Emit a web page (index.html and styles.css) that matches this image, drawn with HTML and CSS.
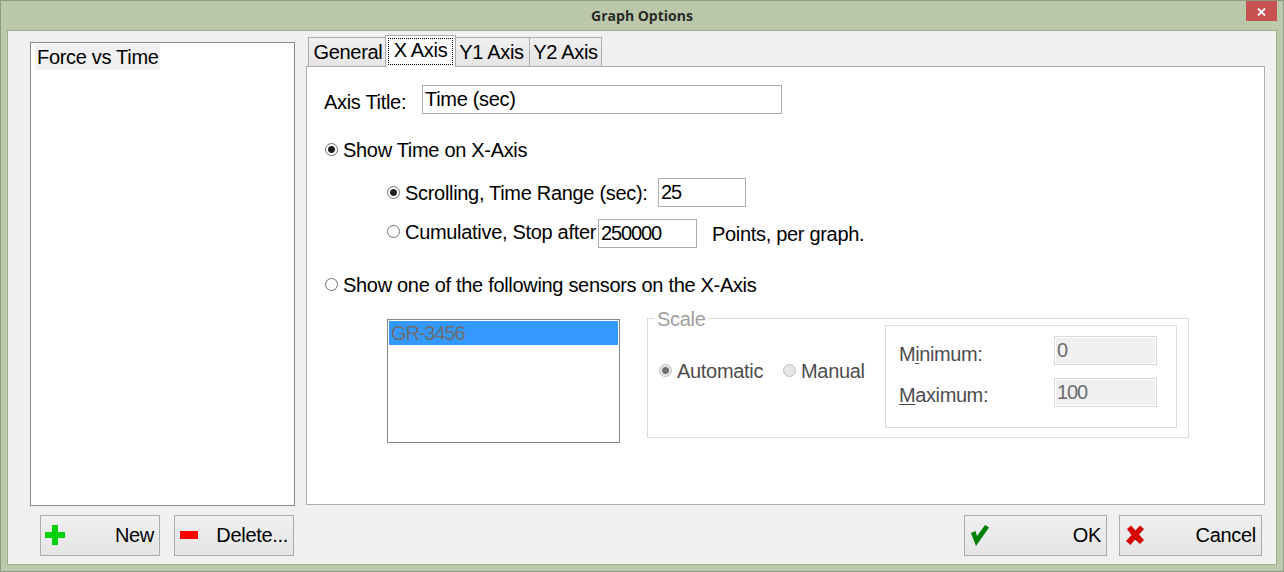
FILE: index.html
```
<!DOCTYPE html>
<html lang="en">

<head>
    <meta charset="UTF-8">
    <title>Graph Options</title>
    <link rel="stylesheet" href="styles.css">
</head>

<body>
    <div class="window">
        <header class="titlebar">
            <h1 class="title">Graph Options</h1>
            <button class="close" aria-label="Close">
                <svg class="icon-close" width="9" height="8" viewBox="0 0 9 8"><path d="M1 0.5L8 7.5M8 0.5L1 7.5" stroke="#fff" stroke-width="1.8" /></svg>
            </button>
        </header>

        <main class="content">
            <section class="sidebar">
                <ul class="graph-list">
                    <li class="graph-item">Force vs Time</li>
                </ul>
                <div class="buttons buttons-left">
                    <button class="btn">
                        <svg class="icon-plus" width="20" height="20" viewBox="0 0 20 20"><path d="M7 0h6v7h7v6h-7v7H7v-7H0V7h7z" fill="#00d20a" /></svg>
                        <span>New</span>
                    </button>
                    <button class="btn">
                        <svg class="icon-minus" width="18" height="8" viewBox="0 0 18 8"><path d="M0 0h18v8H0z" fill="#f00" /></svg>
                        <span class="delete-text">Delete...</span>
                    </button>
                </div>
            </section>

            <section class="options">
                <nav class="tabs">
                    <button class="tab tab-general">General</button>
                    <button class="tab active"><span class="focus">X Axis</span></button>
                    <button class="tab tab-y1">Y1 Axis</button>
                    <button class="tab tab-y2">Y2 Axis</button>
                </nav>

                <div class="panel">
                    <div class="row row-title">
                        <label class="axis-label" for="axisTitle">Axis Title:</label>
                        <input class="field field-title" id="axisTitle" type="text" value="Time (sec)">
                    </div>

                    <label class="row row-time">
                        <input class="radio" type="radio" name="source" checked>
                        <span>Show Time on X-Axis</span>
                    </label>

                    <div class="row row-scroll">
                        <label class="choice">
                            <input class="radio" type="radio" name="mode" checked>
                            <span class="scroll-text">Scrolling, Time Range (sec):</span>
                        </label>
                        <input class="field field-number field-range" type="text" value="25">
                    </div>

                    <div class="row row-cumulative">
                        <label class="choice">
                            <input class="radio" type="radio" name="mode">
                            <span class="cumulative-text">Cumulative, Stop after</span>
                        </label>
                        <input class="field field-number field-points" type="text" value="250000">
                        <span class="points-text">Points, per graph.</span>
                    </div>

                    <label class="row row-sensors">
                        <input class="radio" type="radio" name="source">
                        <span>Show one of the following sensors on the X-Axis</span>
                    </label>

                    <div class="row row-scale">
                        <ul class="sensor-list">
                            <li class="sensor-item">GR-3456</li>
                        </ul>

                        <div class="scale">
                            <span class="scale-legend">Scale</span>
                            <label class="choice scale-auto">
                                <input class="radio" type="radio" name="scale" checked disabled>
                                <span>Automatic</span>
                            </label>
                            <label class="choice scale-manual">
                                <input class="radio" type="radio" name="scale" disabled>
                                <span>Manual</span>
                            </label>
                            <div class="limits">
                                <label class="limit">
                                    <span class="limit-text">M<u>i</u>nimum:</span>
                                    <input class="field field-number" type="text" value="0" disabled>
                                </label>
                                <label class="limit">
                                    <span class="limit-text limit-max"><u>M</u>aximum:</span>
                                    <input class="field field-number" type="text" value="100" disabled>
                                </label>
                            </div>
                        </div>
                    </div>
                </div>

                <div class="buttons buttons-right">
                    <button class="btn btn-wide">
                        <svg class="icon-ok" width="18" height="21" viewBox="0 0 18 21"><path d="M0 8L4.5 6L6 11L14 0L18 2.5L5 21z" fill="#008000" /></svg>
                        <span>OK</span>
                    </button>
                    <button class="btn btn-wide">
                        <svg class="icon-cancel" width="18" height="20" viewBox="0 0 18 20"><path d="M1 4L5 0.5L9.5 5.5L14 0.5L18 4L13 9.5L18 15L14 19L9 14.5L4.5 20L0 16L5.5 10z" fill="#d60000" /></svg>
                        <span>Cancel</span>
                    </button>
                </div>
            </section>
        </main>
    </div>
</body>

</html>
```
FILE: styles.css
```
* {
    box-sizing: border-box;
}

body {
    margin: 0;
    font-family: "Liberation Sans", Arial, sans-serif;
    font-size: 20px;
    line-height: 24px;
    letter-spacing: -0.31px;
    color: #000;
}

button,
input {
    font: inherit;
    letter-spacing: inherit;
    color: inherit;
    margin: 0;
}

ul {
    list-style: none;
    margin: 0;
    padding: 0;
}

svg {
    flex: none;
}

/* window frame */
.window {
    display: flex;
    flex-direction: column;
    width: 1284px;
    height: 572px;
    padding: 0 6px 6px;
    border: 1px solid #8f9b80;
    background: #bbc8a9;
}

.titlebar {
    display: flex;
    justify-content: center;
    position: relative;
    height: 29px;
}

.title {
    margin: 3px 0 0;
    font: bold 14px/24px "Open Sans", "Noto Sans", sans-serif;
    letter-spacing: 0;
    color: #2a2a2a;
}

.close {
    display: flex;
    align-items: center;
    justify-content: center;
    position: absolute;
    top: 0;
    right: 0;
    width: 31px;
    height: 20px;
    padding: 1px 0 0;
    border: none;
    background: #c75050;
}

.content {
    display: flex;
    flex: 1;
    border: 1px solid #9fad8b;
    background: #f0f0f0;
}

/* graph list */
.sidebar {
    width: 265px;
    margin: 11px 0 0 22px;
}

.graph-list {
    height: 464px;
    padding: 1px 4px;
    border: 1px solid #828790;
    background: #fff;
}

.graph-item {
    width: 125px;
    height: 26px;
    padding: 1px 2px;
    background: #f0f0f0;
    white-space: nowrap;
}

.buttons {
    display: flex;
}

.buttons-left {
    gap: 14px;
    margin: 9px 0 0 10px;
}

.buttons-right {
    justify-content: flex-end;
    gap: 12px;
    margin: 10px 3px 0 0;
}

.btn {
    display: flex;
    align-items: center;
    justify-content: space-between;
    width: 120px;
    height: 41px;
    padding: 0 5px 1px 4px;
    border: 1px solid #acacac;
    background: linear-gradient(#f0f0f0, #e5e5e5);
}

.btn-wide {
    width: 143px;
    padding: 0 5px 1px 6px;
}

.icon-minus {
    margin-left: 1px;
}

/* tabs */
.options {
    width: 959px;
    margin: 4px 0 0 11px;
}

.tabs {
    display: flex;
    align-items: flex-end;
    height: 31px;
    padding-left: 2px;
}

.tab {
    height: 29px;
    padding: 0 0 1px;
    border: 1px solid #acacac;
    border-bottom: none;
    background: linear-gradient(#f0f0f0, #e5e5e5);
    white-space: nowrap;
}

.tab-general {
    width: 78px;
    padding-left: 2px;
}

.tab-y1 {
    width: 74px;
    padding-right: 2px;
    border-left: none;
}

.tab-y2 {
    width: 72px;
    border-left: none;
}

.tab.active {
    z-index: 1;
    width: 71px;
    height: 32px;
    margin: 0 0 -1px -1px;
    padding: 2px;
    background: #fff;
}

.focus {
    display: block;
    height: 27px;
    border: 1px dotted #000;
    line-height: 23px;
}

.panel {
    height: 439px;
    padding: 18px 0 0 17px;
    border: 1px solid #acacac;
    background: #fff;
}

/* form rows */
.row,
.choice {
    display: flex;
    align-items: flex-start;
    white-space: nowrap;
}

.row-title {
    height: 53px;
}

.axis-label {
    width: 98px;
    padding-top: 5px;
}

.row-time {
    height: 40px;
    padding-left: 1px;
}

.row-scroll {
    height: 41px;
    padding-left: 63px;
}

.scroll-text {
    width: 253px;
}

.row-scroll .choice {
    padding-top: 3px;
}

.row-cumulative {
    height: 54px;
    padding-left: 63px;
}

.row-cumulative .choice {
    padding-top: 1px;
}

.cumulative-text {
    width: 193px;
}

.points-text {
    padding: 3px 0 0 15px;
}

.row-sensors {
    height: 45px;
    padding-left: 1px;
}

.row-scale {
    padding-left: 63px;
}

.field {
    width: 103px;
    height: 29px;
    padding: 1px 2px;
    border: 1px solid #abadb3;
    outline: none;
    background: #fff;
}

.field:disabled {
    border-color: #d9d9d9;
    background: #f0f0f0;
    box-shadow: inset 0 0 0 1px #fff;
    color: #6d6d6d;
}

.field-title {
    width: 360px;
}

.field-number {
    letter-spacing: -1.1px;
}

.field-range {
    width: 88px;
}

.field-points {
    width: 99px;
}

.radio {
    appearance: none;
    flex: none;
    width: 13px;
    height: 13px;
    margin: 5px 5px 0 0;
    border: 1px solid #707070;
    border-radius: 50%;
    background: #fff;
}

.radio:checked {
    background: radial-gradient(circle, #222 3px, #fff 4px);
}

.radio:disabled {
    border-color: #bcbcbc;
    background: #e6e6e6;
}

.radio:disabled:checked {
    background: radial-gradient(circle, #707070 3px, #e6e6e6 4px);
}

/* sensor list and scale group */
.sensor-list {
    width: 233px;
    height: 124px;
    margin: 1px 27px 0 0;
    padding: 1px;
    border: 1px solid #828790;
}

.sensor-item {
    height: 24px;
    padding-left: 2px;
    background: #3399ff;
    color: #6d6d6d;
    letter-spacing: -1.1px;
}

.scale {
    display: flex;
    align-items: flex-start;
    position: relative;
    width: 542px;
    height: 120px;
    padding: 6px 0 0 11px;
    border: 1px solid #dcdcdc;
    color: #4d4d4d;
}

/* sits over the top border of the group */
.scale-legend {
    position: absolute;
    top: -12px;
    left: 6px;
    padding: 0 3px;
    background: #fff;
    color: #a0a0a0;
}

.scale-auto {
    width: 124px;
    padding-top: 34px;
}

.scale-manual {
    width: 102px;
    padding-top: 34px;
}

.limits {
    display: flex;
    flex-direction: column;
    gap: 12px;
    width: 292px;
    height: 103px;
    padding: 10px 0 0 13px;
    border: 1px solid #dcdcdc;
}

.limit {
    display: flex;
}

.limit-text {
    width: 155px;
    padding-top: 6px;
    letter-spacing: -0.4px;
}

.limit-max {
    padding-top: 5px;
}

.limit u {
    text-decoration-thickness: 1px;
    text-underline-offset: 2px;
}
```
